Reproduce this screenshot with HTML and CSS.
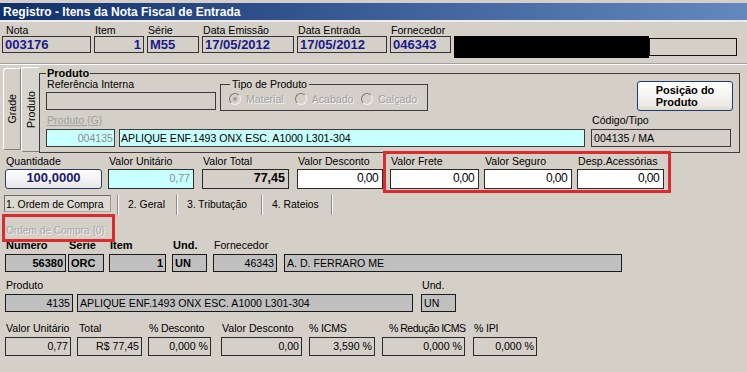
FILE: index.html
```html
<!DOCTYPE html>
<html lang="pt-BR">
<head>
<meta charset="utf-8">
<title>Registro - Itens da Nota Fiscal de Entrada</title>
<link rel="stylesheet" href="styles.css">
</head>
<body>
<div class="titlebar">Registro - Itens da Nota Fiscal de Entrada</div>

<div class="hdr">
  <div class="col w89"><div class="lbl ind4">Nota</div><div class="hbox">003176</div></div>
  <div class="col w50"><div class="lbl">Item</div><div class="hbox r">1</div></div>
  <div class="col w52"><div class="lbl">Série</div><div class="hbox">M55</div></div>
  <div class="col w92"><div class="lbl">Data Emissão</div><div class="hbox">17/05/2012</div></div>
  <div class="col w90"><div class="lbl">Data Entrada</div><div class="hbox">17/05/2012</div></div>
  <div class="col w61"><div class="lbl">Fornecedor</div><div class="hbox">046343</div></div>
  <div class="redact"></div>
  <div class="emptybox"></div>
</div>

<div class="prod-area">
  <div class="vtab grade"><span>Grade</span></div>
  <div class="vtab prod"><span>Produto</span></div>
  <fieldset class="pgroup">
    <legend>Produto</legend>
    <div class="prow1">
      <div class="refcol">
        <div class="lbl">Referência Interna</div>
        <div class="field refbox"></div>
      </div>
      <fieldset class="tipo">
        <legend>Tipo de Produto</legend>
        <div class="radios">
          <div class="ritem"><span class="rc on"></span>Material</div>
          <div class="ritem w67"><span class="rc"></span>Acabado</div>
          <div class="ritem"><span class="rc"></span>Calçado</div>
        </div>
      </fieldset>
      <div class="btn"><span>Posição do<br>Produto</span></div>
    </div>
    <div class="prow2">
      <div class="pcol">
        <div class="lbl glink">Produto {G}</div>
        <div class="frow">
          <div class="field cy r grayt w69">004135</div>
          <div class="field cy w466">APLIQUE ENF.1493 ONX ESC. A1000 L301-304</div>
        </div>
      </div>
      <div class="codcol">
        <div class="lbl">Código/Tipo</div>
        <div class="field codbox">004135 / MA</div>
      </div>
    </div>
  </fieldset>
</div>

<div class="qrow">
  <div class="col w97"><div class="lbl">Quantidade</div><div class="qty">100,0000</div></div>
  <div class="col w86 ml6"><div class="lbl">Valor Unitário</div><div class="qbox cy grayt">0,77</div></div>
  <div class="col w87 ml8"><div class="lbl">Valor Total</div><div class="qbox bold">77,45</div></div>
  <div class="col w86 ml8"><div class="lbl">Valor Desconto</div><div class="qbox wh">0,00</div></div>
  <div class="col w89 ml7"><div class="lbl">Valor Frete</div><div class="qbox wh">0,00</div></div>
  <div class="col w88 ml5"><div class="lbl">Valor Seguro</div><div class="qbox wh">0,00</div></div>
  <div class="col w87 ml5"><div class="lbl">Desp.Acessórias</div><div class="qbox wh">0,00</div></div>
</div>

<div class="tabs">
  <div class="tab sel">1. Ordem de Compra</div>
  <div class="tsep first"></div>
  <div class="tab t2">2. Geral</div>
  <div class="tsep"></div>
  <div class="tab t3">3. Tributação</div>
  <div class="tsep"></div>
  <div class="tab t4">4. Rateios</div>
  <div class="tsep"></div>
</div>

<div class="grp-title">Ordem de Compra {0}</div>

<div class="orow">
  <div class="col w61"><div class="blbl">Numero</div><div class="ofield gr r b">56380</div></div>
  <div class="col w36 ml2"><div class="blbl ind3">Serie</div><div class="ofield gr b">ORC</div></div>
  <div class="col w57 ml5"><div class="blbl">Item</div><div class="ofield gr r b">1</div></div>
  <div class="col w35 ml6"><div class="blbl">Und.</div><div class="ofield gr b">UN</div></div>
  <div class="col w64 ml6"><div class="lbl o">Fornecedor</div><div class="ofield gr r">46343</div></div>
  <div class="col w338 ml7"><div class="lbl o"></div><div class="ofield gr">A. D. FERRARO ME</div></div>
</div>

<div class="orow prodrow">
  <div class="col w68"><div class="lbl o">Produto</div><div class="ofield gr r">4135</div></div>
  <div class="col w336 ml4"><div class="lbl o"></div><div class="ofield gr">APLIQUE ENF.1493 ONX ESC. A1000 L301-304</div></div>
  <div class="col w35 ml8"><div class="lbl o">Und.</div><div class="ofield gr">UN</div></div>
</div>

<div class="orow botrow">
  <div class="col w66"><div class="lbl o">Valor Unitário</div><div class="bfield">0,77</div></div>
  <div class="col w65 ml6"><div class="lbl o ind2">Total</div><div class="bfield">R$ 77,45</div></div>
  <div class="col w63 ml6"><div class="lbl o pct">% Desconto</div><div class="bfield">0,000 %</div></div>
  <div class="col w81 ml10"><div class="lbl o">Valor Desconto</div><div class="bfield">0,00</div></div>
  <div class="col w66 ml7"><div class="lbl o ind0 pct">% ICMS</div><div class="bfield">3,590 %</div></div>
  <div class="col w83 ml7"><div class="lbl o ind8 pct tight">% Redução ICMS</div><div class="bfield">0,000 %</div></div>
  <div class="col w64 ml8"><div class="lbl o pct">% IPI</div><div class="bfield">0,000 %</div></div>
</div>

<div class="mark mark-a"></div>
<div class="mark mark-b"></div>
</body>
</html>
```

FILE: styles.css
```css
* { box-sizing: border-box; }

body {
  margin: 0;
  width: 747px;
  height: 372px;
  overflow: hidden;
  position: relative;
  background: #d4d0c8;
  font-family: "Liberation Sans", Arial, sans-serif;
  font-size: 10.6px;
  color: #000;
}

.titlebar {
  margin-top: 3px;
  height: 19px;
  padding: 1px 0 0 3px;
  line-height: 16px;
  font-size: 12px;
  font-weight: bold;
  color: #fff;
  background: linear-gradient(90deg, #10306c, #3d5d98 50%, #6388bf);
  border-bottom: 2px solid #ececec;
}

/* generic */
.col { flex: none; }
.lbl { height: 11px; line-height: 11px; padding-left: 1px; white-space: nowrap; }
.ind4 { padding-left: 4px; }
.ind3 { padding-left: 3px; }
.ind2 { padding-left: 2px; }
.ind0 { padding-left: 0; }
.ind8 { padding-left: 8px; }
.r { text-align: right; }
.cy { background: #c8ffff; }
.grayt { color: #8c8c8c; }

.w35 { width: 35px; } .w36 { width: 36px; } .w50 { width: 50px; } .w52 { width: 52px; }
.w57 { width: 57px; } .w61 { width: 61px; } .w63 { width: 63px; } .w64 { width: 64px; }
.w65 { width: 65px; } .w66 { width: 66px; } .w67 { width: 67px; } .w68 { width: 68px; }
.w69 { width: 69px; } .w81 { width: 81px; } .w83 { width: 83px; } .w86 { width: 86px; }
.w87 { width: 87px; } .w88 { width: 88px; } .w89 { width: 89px; } .w90 { width: 90px; }
.w92 { width: 92px; } .w97 { width: 97px; } .w336 { width: 336px; } .w338 { width: 338px; }
.w466 { width: 466px; }
.ml2 { margin-left: 2px; } .ml4 { margin-left: 4px; } .ml5 { margin-left: 5px; }
.ml6 { margin-left: 6px; } .ml7 { margin-left: 7px; } .ml8 { margin-left: 8px; }
.ml10 { margin-left: 10px; }

/* header row */
.hdr {
  display: flex;
  align-items: flex-start;
  gap: 3px;
  padding: 3px 0 0 2px;
}
.hbox {
  height: 17px;
  border: 1px solid #333;
  padding: 0 2px;
  font-size: 13px;
  font-weight: bold;
  line-height: 15px;
  color: #1a1a8c;
  white-space: nowrap;
}
.redact { width: 195px; height: 22px; margin-top: 11px; background: #000; flex: none; }
.emptybox { width: 88px; height: 18px; margin: 13px 0 0 -3px; border: 1px solid #111; flex: none; }

/* product area */
.prod-area {
  margin-top: 5px;
  display: flex;
  align-items: flex-start;
  padding: 0 7px 0 3px;
  border-top: 1px solid #a0a0a0;
  box-shadow: inset 0 1px #fff;
}
.vtab {
  flex: none;
  width: 18px;
  border: 1px solid;
  border-color: #fff #808080 #808080 #fff;
  border-radius: 3px 0 0 3px;
  display: flex;
  align-items: center;
  justify-content: center;
}
.vtab span { writing-mode: vertical-rl; transform: rotate(180deg); white-space: nowrap; }
.vtab.grade { margin-top: 4px; height: 82px; }
.vtab.prod { margin-top: 3px; height: 85px; border-right: none; background: #d8d5cd; }

.pgroup {
  flex: none;
  width: 701px;
  margin: 3px 0 0 0;
  padding: 0 6px 5px 6px;
  border: 1px solid #3c3c3c;
  min-width: 0;
}
.pgroup > legend {
  padding: 0 1px;
  font-size: 11px;
  font-weight: bold;
  line-height: 12px;
}
.prow1 { display: flex; align-items: flex-start; }
.refcol { width: 170px; flex: none; }
.field {
  height: 18px;
  border: 1px solid #3a3a3a;
  padding: 0 1px;
  line-height: 16px;
  white-space: nowrap;
  overflow: hidden;
  flex: none;
}
.refbox { margin-top: 2px; }

.tipo {
  flex: none;
  width: 208px;
  margin: 0 0 0 4px;
  padding: 0 0 0 8px;
  border: 1px solid #3c3c3c;
  min-width: 0;
}
.tipo > legend { margin-left: 1px; padding: 0 2px; line-height: 11px; font-size: 10.6px; }
.radios { display: flex; align-items: center; height: 20px; padding-bottom: 3px; }
.ritem { display: flex; align-items: center; width: 66px; color: #a0a0a0; white-space: nowrap; text-shadow: 1px 1px 0 #f4f4f4; }
.ritem.w67 { width: 67px; }
.rc {
  flex: none;
  width: 12px;
  height: 12px;
  margin-right: 5px;
  border-radius: 50%;
  border: 1px solid;
  border-color: #7a7a7a #f4f4f4 #f4f4f4 #7a7a7a;
  background: #d4d0c8;
  display: flex;
  align-items: center;
  justify-content: center;
}
.rc.on::after { content: ""; width: 4px; height: 4px; border-radius: 50%; background: #a0a0a0; }

.btn {
  flex: none;
  margin: 2px 0 0 auto;
  width: 96px;
  height: 30px;
  border: 1px solid #1f3c6e;
  border-radius: 3px;
  background: linear-gradient(#ffffff, #ecebe6 80%, #dcdad2);
  font-size: 11px;
  font-weight: bold;
  line-height: 12.4px;
  display: flex;
  align-items: center;
  justify-content: center;
}
.btn span { text-align: left; }

.prow2 { display: flex; margin-top: 4px; }
.glink { color: #a0a0a0; text-decoration: underline; }
.frow { display: flex; gap: 4px; margin-top: 3px; }
.codcol { margin-left: 6px; width: 140px; flex: none; }
.codbox { margin-top: 3px; width: 140px; padding-left: 2px; }

/* quantity row */
.qrow { display: flex; align-items: flex-start; padding-left: 5px; margin-top: 3px; }
.qrow .lbl { margin-bottom: 2px; }
.qty {
  height: 20px;
  border: 1px solid #2b3f66;
  border-radius: 3px;
  background: linear-gradient(#ffffff, #e6e6e6);
  font-size: 13px;
  font-weight: bold;
  line-height: 16px;
  color: #1a1a6e;
  text-align: center;
}
.qbox {
  height: 20px;
  border: 1px solid #2a2a2a;
  padding: 0 3px 0 2px;
  line-height: 17px;
  text-align: right;
}
.qbox.bold { font-size: 12.5px; font-weight: bold; }
.qbox.wh { background: #fff; font-size: 12px; letter-spacing: -0.6px; padding-right: 4px; }

/* tabs */
.tabs { display: flex; align-items: flex-start; height: 20px; margin-top: 6px; font-size: 10.4px; line-height: 20px; }
.tab { flex: none; padding-left: 9px; white-space: nowrap; }
.tab.sel {
  margin-left: 4px;
  width: 107px;
  height: 17px;
  padding-left: 1px;
  line-height: 17px;
  border: 1px solid #6b6b6b;
  border-right-color: #9a9a9a;
  border-bottom-color: #a8a8a8;
  background: #dddad2;
}
.tab.t2 { width: 57px; }
.tab.t3 { width: 83px; }
.tab.t4 { width: 68px; }
.tsep { flex: none; width: 2px; height: 20px; border-left: 1px solid #8a8a8a; border-right: 1px solid #fff; }
.tsep.first { margin-left: 6px; }

.grp-title { margin-top: 10px; padding-left: 6px; height: 11px; line-height: 11px; font-size: 10.1px; color: #a8a8a8; text-shadow: 1px 1px 0 #f0f0f0; }

/* order section */
.orow { display: flex; align-items: flex-start; padding-left: 5px; margin-top: 4px; }
.orow.prodrow { margin-top: 8px; }
.orow.botrow { margin-top: 11px; }
.blbl { height: 11px; line-height: 11px; font-size: 11px; font-weight: bold; padding-left: 1px; white-space: nowrap; }
.lbl.o { padding-left: 1px; }
.lbl.o.ind2 { padding-left: 2px; }
.lbl.o.ind0 { padding-left: 0; }
.lbl.o.ind8 { padding-left: 7px; }
.lbl.pct { letter-spacing: -0.2px; }
.lbl.pct.tight { letter-spacing: -0.55px; }
.ofield {
  margin-top: 3px;
  height: 18px;
  border: 1px solid #1a1a1a;
  padding: 0 2px;
  line-height: 16px;
  white-space: nowrap;
  overflow: hidden;
}
.ofield.gr { background: #c0c0c0; }
.ofield.b { font-size: 11px; font-weight: bold; }
.bfield {
  margin-top: 3px;
  height: 19px;
  border: 1px solid #2a2a2a;
  padding: 0 2px;
  line-height: 17px;
  text-align: right;
  white-space: nowrap;
}

/* red annotation boxes laid over the form */
.mark { position: absolute; border: 3px solid #dc2a2f; pointer-events: none; }
.mark-a { left: 383px; top: 151px; width: 288px; height: 42px; }
.mark-b { left: 2px; top: 214px; width: 113px; height: 28px; }
```
